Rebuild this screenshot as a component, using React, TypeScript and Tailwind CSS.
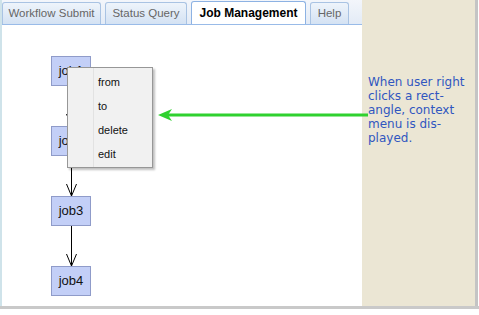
import React from "react"

const JOBS = ["job1", "job2", "job3", "job4"]
const MENU = ["from", "to", "delete", "edit"]

const TABS = [
  { label: "Workflow Submit", w: "w-[99px]" },
  { label: "Status Query", w: "w-[82px]" },
  { label: "Job Management", w: "w-[115px]", active: true },
  { label: "Help", w: "w-[39px]" },
]

export default function App() {
  return (
    <div
      className="w-[479px] h-[315px] bg-white relative overflow-hidden"
      style={{ fontFamily: "'Liberation Sans', Arial, sans-serif" }}
    >
      <div className="flex h-[309px] border-b-[3px] border-[#c9c9c9]">
        {/* left panel */}
        <div className="w-[362px] flex flex-col border-l-2 border-[#cfe3ea]">
          <div className="h-[25px] bg-gradient-to-b from-[#f3f6fb] to-[#e3ebf6] border-b border-[#99bbe8] flex items-end gap-[4px]">
            {TABS.map((t) => (
              <div
                key={t.label}
                className={`${t.w} shrink-0 whitespace-nowrap flex items-center justify-center rounded-t-[3px] border border-b-0 ${
                  t.active
                    ? "h-[23px] bg-white border-[#8db2e3] text-black font-bold text-[12px]"
                    : "h-[22px] bg-gradient-to-b from-[#eef4fb] to-[#d4e2f3] border-[#a9c3e3] text-[#666] text-[11.5px]"
                }`}
              >
                {t.label}
              </div>
            ))}
          </div>
          <div className="flex-1 relative bg-white">
            {/* connectors */}
            <svg className="absolute left-0 top-0" width="360" height="283">
              {[0, 1, 2].map((i) => {
                const y1 = 61 + i * 70
                const y2 = 101 + i * 70
                return (
                  <g key={i} stroke="#000" strokeWidth="1" fill="none">
                    <line x1="69.5" y1={y1} x2="69.5" y2={y2} />
                    <polyline points={`64.5,${y2 - 12} 69.5,${y2} 74.5,${y2 - 12}`} />
                  </g>
                )
              })}
            </svg>
            {JOBS.map((j, i) => (
              <div
                key={j}
                className="absolute left-[49px] w-[40px] h-[30px] bg-[#c3cff7] border border-[#8f9bc9] flex items-center justify-center text-[13px] text-[#111]"
                style={{ top: 31 + i * 70 }}
              >
                {j}
              </div>
            ))}
            {/* context menu */}
            <div className="absolute left-[65px] top-[42px] w-[86px] h-[101px] bg-[#f1f1f1] border border-[#979797] shadow-[2px_2px_2px_rgba(0,0,0,0.25)] flex">
              <div className="w-[26px] border-r border-[#e2e2e2]" />
              <div className="flex flex-col pt-[2px] pl-[4px] text-[11px] text-[#111]">
                {MENU.map((m) => (
                  <div key={m} className="h-[24px] flex items-center">
                    {m}
                  </div>
                ))}
              </div>
            </div>
          </div>
        </div>
        {/* right note panel */}
        <div className="w-[113px] bg-[#ebe6d4] pt-[75px] pl-[6px]">
          <p
            className="text-[12px] leading-[14px] text-[#3056c0]"
            style={{ fontFamily: "'DejaVu Sans', Verdana, sans-serif" }}
          >
            When user right
            <br />
            clicks a rect-
            <br />
            angle, context
            <br />
            menu is dis-
            <br />
            played.
          </p>
        </div>
        <div className="w-[3px] bg-[#c4c4c4]" />
      </div>
      {/* green pointer arrow */}
      <svg className="absolute left-0 top-0 pointer-events-none" width="479" height="315">
        <line x1="368" y1="115" x2="166" y2="115" stroke="#2fd12f" strokeWidth="3" />
        <polygon points="158,115 172,109 168,115 172,121" fill="#2fd12f" />
      </svg>
    </div>
  )
}
